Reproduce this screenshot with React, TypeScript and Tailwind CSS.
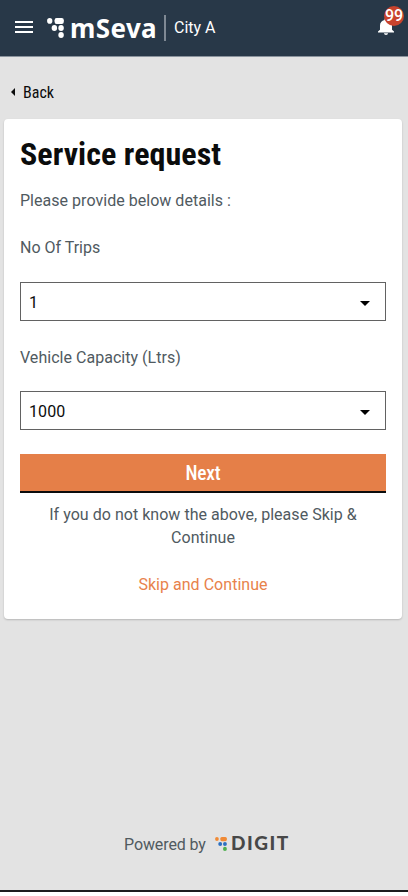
import React from "react";

function SelectField({ value }: { value: string }) {
  return (
    <div className="flex h-[39px] items-center justify-between border border-[#626262] bg-white pt-px pl-2 pr-[15px] text-[16px] text-[#0b0c0c]">
      <span className="pt-px tracking-[0.1px]">{value}</span>
      <svg width="10" height="5" viewBox="0 0 10 5" className="mt-0.5">
        <path d="M0 0H10L5 5Z" fill="#000" />
      </svg>
    </div>
  );
}

function LogoDots({ top, mid, low, className }: { top: string; mid: string; low: string; className: string }) {
  return (
    <svg viewBox="0 0 18 20" className={className} preserveAspectRatio="none">
      <circle cx="2.9" cy="2.9" r="2.8" fill={top} />
      <rect x="8" y="0.1" width="9.8" height="5.8" rx="2.2" fill={top} />
      <circle cx="7.8" cy="10" r="2.9" fill={mid} />
      <circle cx="14.9" cy="10" r="2.9" fill={mid} />
      <circle cx="14.9" cy="17" r="2.9" fill={low} />
    </svg>
  );
}

export default function App() {
  return (
    <div className="h-[896px] w-full overflow-hidden bg-white font-['Roboto',sans-serif]">
      <div className="flex h-[892px] flex-col border-b-2 border-[#1c1c1e] bg-[#e3e3e3]">
        <header className="flex h-[57px] shrink-0 items-center border-b border-[#8a939d] bg-[#283848] pl-[15px] text-white">
          <svg width="18" height="12" viewBox="0 0 18 12" className="mb-0.5 shrink-0" fill="#fff">
            <path d="M0 0H18V2H0ZM0 5H18V7H0ZM0 10H18V12H0Z" />
          </svg>
          <LogoDots top="#fff" mid="#fff" low="#fff" className="ml-[14px] h-5 w-[17px]" />
          <span className="ml-[6px] w-[87px] whitespace-nowrap font-['Noto_Sans',sans-serif] text-[26px] font-bold leading-8 tracking-[0.4px]">
            mSeva
          </span>
          <span className="ml-[7px] h-[26px] w-0.5 bg-[#7f8994]" />
          <span className="ml-[8px] whitespace-nowrap text-[16px]">City A</span>
          <div className="relative ml-auto mr-[14px] h-6 w-4">
            <svg width="16" height="17" viewBox="4 2.5 16 19.5" preserveAspectRatio="none" className="mt-[2px]" fill="#fff">
              <path d="M12 22c1.1 0 2-.9 2-2h-4c0 1.1.9 2 2 2zm6-6v-5c0-3.07-1.64-5.64-4.5-6.32V4c0-.83-.67-1.5-1.5-1.5s-1.5.67-1.5 1.5v.68C7.63 5.36 6 7.92 6 11v5l-2 2v1h16v-1l-2-2z" />
            </svg>
            <span className="absolute -top-[10px] left-[6px] flex h-5 w-5 items-center justify-center rounded-full bg-[#c8432d] text-[16px] font-medium leading-none">
              99
            </span>
          </div>
        </header>
        <div className="mt-[23px] flex h-6 shrink-0 items-center pl-[11px] text-[#0b0c0c]">
          <svg width="4" height="8" viewBox="0 0 4 8" className="mr-2">
            <path d="M4 0V8L0 4Z" fill="#0b0c0c" />
          </svg>
          <span className="pt-px text-[16px] [font-stretch:75%]">Back</span>
        </div>
        <main className="mx-1 mt-[15px] mr-[6px] h-[500px] shrink-0 rounded bg-white px-4 pt-4 text-[16px] leading-[23px] text-[#505a5f] shadow-[0_1px_2px_rgba(0,0,0,0.2)]">
          <h1 className="h-[38px] whitespace-nowrap text-[32px] font-bold leading-[38px] tracking-[0.07px] text-[#0b0c0c] [font-stretch:75%]">
            Service request
          </h1>
          <p className="mt-4 tracking-[0.03px]">Please provide below details :</p>
          <p className="mt-6 mb-[23px]">No Of Trips</p>
          <SelectField value="1" />
          <p className="mt-[25px] mb-[22px] tracking-[0.03px]">Vehicle Capacity (Ltrs)</p>
          <SelectField value="1000" />
          <button className="mt-[24px] flex h-[39px] w-full items-center justify-center border-b-2 border-[#0b0c0c] bg-[#e57f48] pt-px text-[19.5px] font-medium tracking-[-0.2px] text-white [font-stretch:75%]">
            Next
          </button>
          <p className="mt-[10px] text-center tracking-[0.03px]">If you do not know the above, please Skip &amp; Continue</p>
          <p className="mt-6 text-center tracking-[0.03px] text-[#e8824b]">Skip and Continue</p>
        </main>
        <footer className="mt-auto mb-[33px] flex h-6 items-center pl-[124px] text-[#505a5f]">
          <span className="w-[82px] whitespace-nowrap text-[16px] tracking-[-0.1px]">Powered by</span>
          <LogoDots top="#f08a36" mid="#2c6fc0" low="#4fb04f" className="ml-[9px] mb-[3px] h-[14px] w-3" />
          <span className="ml-[4px] mb-[4px] font-['Lato',sans-serif] text-[19px] font-black leading-6 tracking-[1.5px] text-[#484848]">
            DIGIT
          </span>
        </footer>
      </div>
    </div>
  );
}
